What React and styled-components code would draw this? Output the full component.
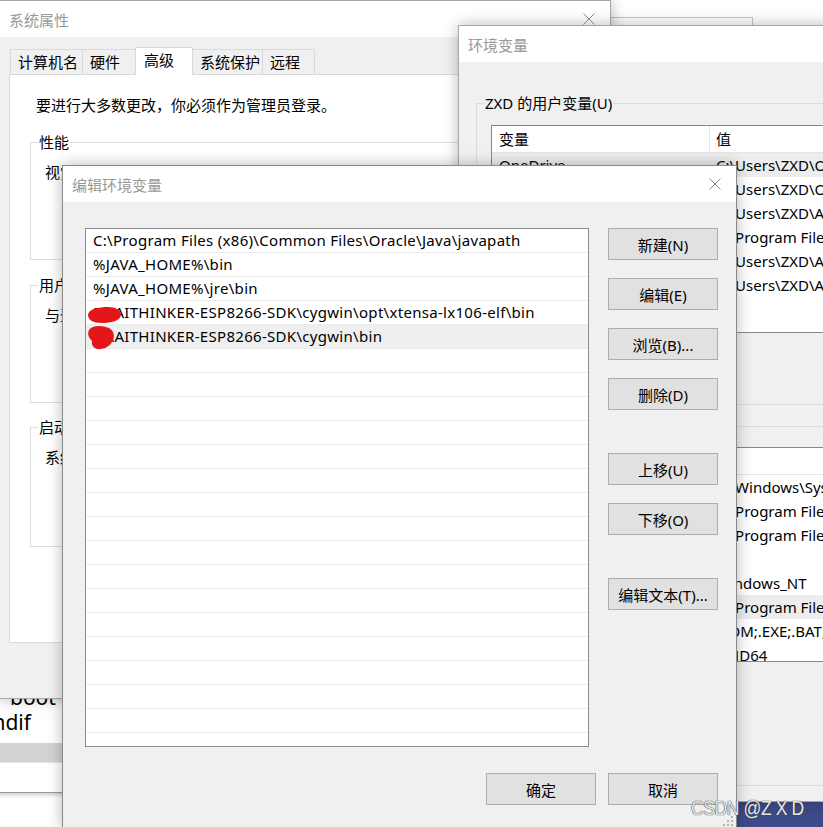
import React from "react";
import styled, { createGlobalStyle } from "styled-components";

const GlobalStyle = createGlobalStyle`
  html, body { margin: 0; padding: 0; background: #fff; }
  body {
    font-family: "Noto Sans", "Noto Sans CJK SC", sans-serif;
    font-size: 15px;
    color: #000;
  }
  * { box-sizing: border-box; }
`;

const tabs = [
  { label: "计算机名", w: 73 },
  { label: "硬件", w: 54 },
  { label: "高级", w: 58, active: true },
  { label: "系统保护", w: 71 },
  { label: "远程", w: 53 },
];

const groups = [
  { label: "性能", text: "视觉效果，处理器计划，内存使用，以及虚拟内存", mt: 27, h: 118 },
  { label: "用户配置文件", text: "与登录帐户相关的桌面设置", mt: 25, h: 118 },
  { label: "启动和故障恢复", text: "系统启动、系统故障和调试信息", mt: 24, h: 120 },
];

const userVars = [
  { name: "OneDrive", value: "C:\\Users\\ZXD\\OneDrive", selected: true },
  { name: "OneDriveConsumer", value: "C:\\Users\\ZXD\\OneDrive" },
  { name: "Path", value: "C:\\Users\\ZXD\\AppData\\Local\\Microsoft\\WindowsApps" },
  { name: "PyCharm", value: "C:\\Program Files\\JetBrains\\PyCharm\\bin" },
  { name: "TEMP", value: "C:\\Users\\ZXD\\AppData\\Local\\Temp" },
  { name: "TMP", value: "C:\\Users\\ZXD\\AppData\\Local\\Temp" },
];

const systemVars = [
  { name: "ComSpec", value: "C:\\Windows\\System32\\cmd.exe" },
  { name: "JAVA_HOME", value: "C:\\Program Files\\Java\\jdk1.8.0_211" },
  { name: "CLASSPATH", value: "C:\\Program Files\\Java\\jdk1.8.0_211\\lib" },
  { name: "NUMBER_OF_PROCESSORS", value: "8" },
  { name: "OS", value: "Windows_NT" },
  { name: "Path", value: "C:\\Program Files (x86)\\Common Files\\Oracle", selected: true },
  { name: "PATHEXT", value: ".COM;.EXE;.BAT;.CMD;.VBS;.VBE;.JS" },
  { name: "PROCESSOR_ARCHITECTURE", value: "AMD64" },
];

const paths = [
  "C:\\Program Files (x86)\\Common Files\\Oracle\\Java\\javapath",
  "%JAVA_HOME%\\bin",
  "%JAVA_HOME%\\jre\\bin",
  "D:\\AITHINKER-ESP8266-SDK\\cygwin\\opt\\xtensa-lx106-elf\\bin",
  "D:\\AITHINKER-ESP8266-SDK\\cygwin\\bin",
];

const sideButtons = [
  { label: "新建(N)" },
  { label: "编辑(E)" },
  { label: "浏览(B)..." },
  { label: "删除(D)" },
  { label: "上移(U)", sep: true },
  { label: "下移(O)" },
  { label: "编辑文本(T)...", sep: true },
];

export default function App() {
  const pathRows = Array.from({ length: 22 }, (_, i) => paths[i] || "");

  return (
    <Desktop>
      <GlobalStyle />

      <Editor>
        <CodeLine $indent={43}>boot</CodeLine>
        <CodeLine>#endif</CodeLine>
        <EditorBar />
      </Editor>

      <BackWindow />
      <TaskStrip />

      {/* 系统属性 */}
      <Window $x={-1} $y={0} $w={612} $h={699} $z={2}>
        <TitleBar>
          <span>系统属性</span>
          <CloseIcon />
        </TitleBar>
        <SysBody>
          <TabStrip>
            {tabs.map(t => (
              <Tab key={t.label} $w={t.w} $active={t.active}>{t.label}</Tab>
            ))}
          </TabStrip>
          <TabPanel>
            <Intro>要进行大多数更改，你必须作为管理员登录。</Intro>
            {groups.map(g => (
              <GroupBox key={g.label} $mt={g.mt} $h={g.h} $bg="#fff">
                <GroupLabel $bg="#fff">{g.label}</GroupLabel>
                <GroupText>{g.text}</GroupText>
              </GroupBox>
            ))}
          </TabPanel>
        </SysBody>
      </Window>

      {/* 环境变量 */}
      <Window $x={458} $y={25} $w={520} $h={777} $z={3}>
        <TitleBar>
          <span>环境变量</span>
          <CloseIcon />
        </TitleBar>
        <EnvBody>
          <GroupBox $mt={41} $h={302} $bg="#f0f0f0">
            <GroupLabel $bg="#f0f0f0">ZXD 的用户变量(U)</GroupLabel>
            <GroupInner>
              <VarTable $h={208}>
                <VarHeader>
                  <NameCell $header>变量</NameCell>
                  <ValueCell $header>值</ValueCell>
                </VarHeader>
                {userVars.map(v => (
                  <VarRow key={v.name} $selected={v.selected}>
                    <NameCell>{v.name}</NameCell>
                    <ValueCell>{v.value}</ValueCell>
                  </VarRow>
                ))}
              </VarTable>
            </GroupInner>
          </GroupBox>
          <GroupBox $mt={21} $h={360} $bg="#f0f0f0">
            <GroupLabel $bg="#f0f0f0">系统变量(S)</GroupLabel>
            <GroupInner $pt={20}>
              <VarTable $h={215}>
                <VarHeader>
                  <NameCell $header>变量</NameCell>
                  <ValueCell $header>值</ValueCell>
                </VarHeader>
                {systemVars.map(v => (
                  <VarRow key={v.name} $selected={v.selected}>
                    <NameCell>{v.name}</NameCell>
                    <ValueCell>{v.value}</ValueCell>
                  </VarRow>
                ))}
              </VarTable>
            </GroupInner>
          </GroupBox>
        </EnvBody>
      </Window>

      {/* 编辑环境变量 */}
      <Window $x={62} $y={165} $w={675} $h={664} $z={4} $front>
        <TitleBar>
          <span>编辑环境变量</span>
          <CloseIcon />
        </TitleBar>
        <EditBody>
          <EditMain>
            <PathList>
              {pathRows.map((p, i) => (
                <PathRow key={i} $selected={i === 4}>{p}</PathRow>
              ))}
              <Scribble viewBox="0 0 40 130" width="40" height="130">
                <path d="M2 86 C2 80 13 78 22 78 C30 78 35 81 35 86 C34 92 25 94 16 94 C7 94 2 91 2 86 Z" />
                <path d="M3 101 C6 96 16 96 23 99 C28 102 29 107 27 111 C25 116 21 119 15 120 C9 121 5 117 6 112 C3 109 1 105 3 101 Z" />
              </Scribble>
            </PathList>
            <ButtonColumn>
              {sideButtons.map(b => (
                <Button key={b.label} $sep={b.sep}>{b.label}</Button>
              ))}
            </ButtonColumn>
          </EditMain>
          <Footer>
            <Button>确定</Button>
            <Button>取消</Button>
          </Footer>
        </EditBody>
        <Grip viewBox="0 0 10 10" width="10" height="10">
          <rect x="8" y="0" width="2" height="2" />
          <rect x="4" y="4" width="2" height="2" />
          <rect x="8" y="4" width="2" height="2" />
          <rect x="0" y="8" width="2" height="2" />
          <rect x="4" y="8" width="2" height="2" />
          <rect x="8" y="8" width="2" height="2" />
        </Grip>
      </Window>

      <Watermark>CSDN @Z X D</Watermark>
    </Desktop>
  );
}

function CloseIcon() {
  return (
    <CloseSvg viewBox="0 0 12 12" width="12" height="12">
      <path d="M0.5 0.5 L11.5 11.5 M11.5 0.5 L0.5 11.5" />
    </CloseSvg>
  );
}

const Desktop = styled.div`
  position: relative;
  width: 823px;
  height: 827px;
  overflow: hidden;
  background: #fff;
`;

const Window = styled.div`
  position: absolute;
  z-index: ${p => p.$z};
  left: ${p => p.$x}px;
  top: ${p => p.$y}px;
  width: ${p => p.$w}px;
  height: ${p => p.$h}px;
  display: flex;
  flex-direction: column;
  background: #f0f0f0;
  border: 1px solid ${p => (p.$front ? "#8a8a8a" : "#a8a8a8")};
  box-shadow: 0 0 14px rgba(0, 0, 0, 0.28);
`;

const TitleBar = styled.div`
  flex: 0 0 36px;
  display: flex;
  align-items: center;
  justify-content: space-between;
  padding: 0 15px 0 9px;
  background: #fff;
  color: #999;
  font-size: 15px;
`;

const CloseSvg = styled.svg`
  stroke: #8c8c8c;
  stroke-width: 1;
  fill: none;
`;

const SysBody = styled.div`
  flex: 1;
  padding-top: 10px;
`;

const TabStrip = styled.div`
  display: flex;
  align-items: flex-end;
  height: 27px;
  padding-left: 10px;
`;

const Tab = styled.div`
  position: relative;
  z-index: ${p => (p.$active ? 2 : 1)};
  width: ${p => p.$w}px;
  height: ${p => (p.$active ? 28 : 25)}px;
  margin-right: -1px;
  margin-bottom: ${p => (p.$active ? -1 : 0)}px;
  padding-left: ${p => (p.$active ? 8 : 7)}px;
  line-height: ${p => (p.$active ? 25 : 24)}px;
  background: ${p => (p.$active ? "#fff" : "#f0f0f0")};
  border: 1px solid #d9d9d9;
  border-bottom: none;
  white-space: nowrap;
`;

const TabPanel = styled.div`
  position: relative;
  z-index: 1;
  width: 600px;
  height: 569px;
  margin-left: 9px;
  padding: 20px 10px 0 20px;
  background: #fff;
  border: 1px solid #d9d9d9;
`;

const Intro = styled.div`
  padding-left: 6px;
  line-height: 20px;
`;

const GroupBox = styled.div`
  position: relative;
  height: ${p => p.$h}px;
  margin-top: ${p => p.$mt}px;
  border: 1px solid #dcdcdc;
  background: ${p => p.$bg};
`;

const GroupLabel = styled.div`
  position: absolute;
  top: -11px;
  left: 7px;
  padding: 0 1px;
  line-height: 20px;
  background: ${p => p.$bg};
  white-space: nowrap;
`;

const GroupText = styled.div`
  padding: 19px 0 0 14px;
  line-height: 20px;
  white-space: nowrap;
`;

const EnvBody = styled.div`
  flex: 1;
  padding: 0 0 0 17px;
`;

const GroupInner = styled.div`
  padding: ${p => p.$pt ?? 21}px 0 0 14px;
`;

const VarTable = styled.div`
  width: 470px;
  height: ${p => p.$h}px;
  overflow: hidden;
  background: #fff;
  border: 1px solid #828790;
`;

const VarHeader = styled.div`
  display: flex;
  height: 27px;
  border-bottom: 1px solid #e5e5e5;
`;

const VarRow = styled.div`
  display: flex;
  height: 24px;
  background: ${p => (p.$selected ? "#ededed" : "#fff")};
`;

const NameCell = styled.div`
  flex: 0 0 218px;
  padding-left: 7px;
  line-height: ${p => (p.$header ? 26 : 24)}px;
  border-right: ${p => (p.$header ? "1px solid #e5e5e5" : "1px solid transparent")};
  overflow: hidden;
  white-space: nowrap;
`;

const ValueCell = styled.div`
  flex: 1;
  padding-left: 6px;
  line-height: ${p => (p.$header ? 26 : 24)}px;
  white-space: nowrap;
  overflow: hidden;
`;

const EditBody = styled.div`
  flex: 1;
  display: flex;
  flex-direction: column;
  padding: 26px 18px 0 22px;
`;

const EditMain = styled.div`
  display: flex;
  gap: 19px;
`;

const PathList = styled.div`
  position: relative;
  width: 504px;
  height: 519px;
  overflow: hidden;
  background: #fff;
  border: 1px solid #8c8c8c;
`;

const PathRow = styled.div`
  height: 24px;
  padding-left: 7px;
  line-height: 23px;
  letter-spacing: 0.3px;
  border-bottom: 1px solid #ebebeb;
  background: ${p => (p.$selected ? "#efefef" : "#fff")};
  white-space: nowrap;
`;

const Scribble = styled.svg`
  position: absolute;
  left: 0;
  top: 0;
  fill: #e3161c;
`;

const ButtonColumn = styled.div`
  display: flex;
  flex-direction: column;
  gap: 18px;
  width: 110px;
`;

const Button = styled.div`
  width: 110px;
  height: 32px;
  margin-top: ${p => (p.$sep ? 25 : 0)}px;
  display: flex;
  align-items: center;
  justify-content: center;
  background: #e1e1e1;
  border: 1px solid #adadad;
  white-space: nowrap;
`;

const Footer = styled.div`
  display: flex;
  justify-content: flex-end;
  gap: 12px;
  margin-top: 26px;
`;

const Grip = styled.svg`
  position: absolute;
  right: 3px;
  bottom: 2px;
  fill: #b0b0b0;
`;

const Editor = styled.div`
  position: absolute;
  z-index: 1;
  left: -40px;
  top: 650px;
  width: 120px;
  height: 143px;
  padding-top: 35px;
  background: #fff;
  border-bottom: 1px solid #999;
  box-shadow: 0 2px 4px rgba(0, 0, 0, 0.2);
`;

const CodeLine = styled.div`
  padding-left: ${p => 7 + (p.$indent || 0)}px;
  height: 25px;
  line-height: 25px;
  font-size: 21px;
  white-space: nowrap;
`;

const EditorBar = styled.div`
  height: 20px;
  margin-top: 8px;
  background: #d3d3d3;
  border-bottom: 1px solid #e6e6e6;
`;

const BackWindow = styled.div`
  position: absolute;
  z-index: 1;
  left: 560px;
  top: 17px;
  width: 193px;
  height: 80px;
  background: #fff;
  border: 1px solid #c4c4c4;
`;

const TaskStrip = styled.div`
  position: absolute;
  z-index: 1;
  left: 736px;
  top: 801px;
  width: 87px;
  height: 26px;
  background: #3e4b8a;
`;

const Watermark = styled.div`
  position: absolute;
  z-index: 5;
  left: 691px;
  top: 796px;
  font-family: "Liberation Sans", sans-serif;
  font-size: 20px;
  line-height: 24px;
  letter-spacing: -0.5px;
  color: #e8e8e8;
  text-shadow: 0 0 1px #333, 0 0 1px #333;
  white-space: nowrap;
  transform: scaleX(0.88);
  transform-origin: left center;
`;
